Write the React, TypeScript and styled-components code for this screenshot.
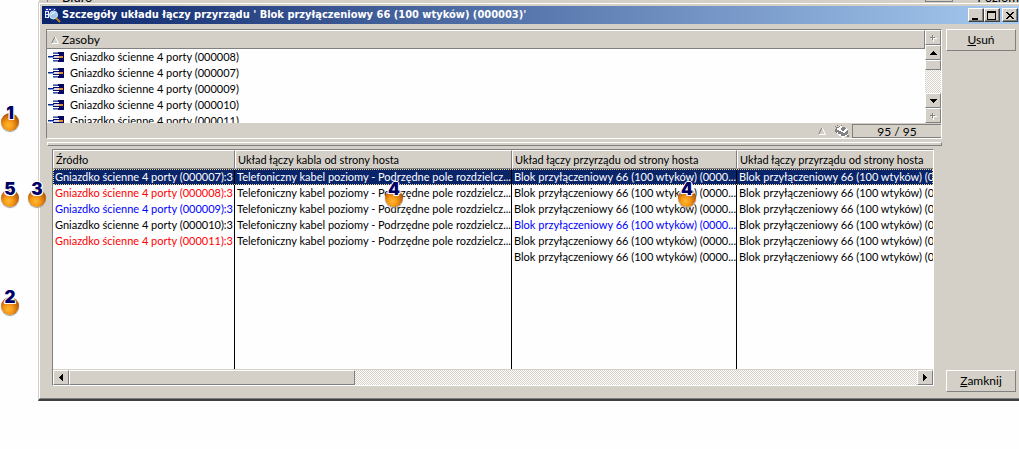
import React from "react";
import styled, { createGlobalStyle, css } from "styled-components";

const face = "#d4d0c8";
const shade = "#808080";

const GlobalStyle = createGlobalStyle`
  * { box-sizing: border-box; }
  body {
    margin: 0;
    background: #fefefe;
    color: #000;
    font: 11px/16px Lato, "Liberation Sans", sans-serif;
  }
  button { font: inherit; color: inherit; padding: 0; }
`;

const dither = css`
  background: repeating-conic-gradient(${face} 0 25%, #fff 0 50%) 0 0 / 2px 2px;
`;

const Page = styled.main`
  position: relative;
  padding-left: 38px;
  padding-bottom: 48px;
  overflow: hidden;
`;

const BackWindow = styled.div`
  display: flex;
  align-items: flex-end;
  justify-content: space-between;
  height: 2px;
  overflow: hidden;
  background: ${face};
  border-left: 1px solid #fff;
  padding-left: 8px;
  font-size: 13px;
  line-height: 10px;
`;

const BackLabel = styled.span`
  border-left: 1px solid ${shade};
  padding-left: 14px;
`;

const BackField = styled.span`
  display: flex;
  gap: 24px;
  &::before {
    content: "";
    width: 26px;
    border: 1px solid ${shade};
  }
`;

const Dialog = styled.section`
  background: ${face};
  border: 1px solid ${face};
  border-right: 0;
  border-bottom: 2px solid #404040;
`;

const DialogFrame = styled.div`
  border: 1px solid #fff;
  border-right: 0;
  border-bottom: 1px solid ${shade};
  padding: 2px 0 12px 2px;
`;

const TitleBar = styled.header`
  display: flex;
  align-items: center;
  height: 18px;
  padding: 0 1px 0 3px;
  background: linear-gradient(90deg, #0a246a, #a6caf0);
`;

const Title = styled.h1`
  flex: 1;
  margin: 0 0 0 1px;
  color: #fff;
  font: bold 11px/16px "DejaVu Sans Condensed", Tahoma, sans-serif;
  white-space: nowrap;
`;

const CaptionButton = styled.button<{ $apart?: boolean }>`
  display: grid;
  place-items: center;
  width: 16px;
  height: 14px;
  margin-left: ${(p) => (p.$apart ? 2 : 0)}px;
  background: ${face};
  border: 1px solid;
  border-color: #fff #404040 #404040 #fff;
  box-shadow: inset -1px -1px ${shade};
`;

const Content = styled.div`
  display: flex;
  gap: 4px;
  padding: 5px 3px 0 4px;
`;

const Main = styled.div`
  flex: 1;
  min-width: 0;
`;

const Side = styled.div`
  display: flex;
  flex-direction: column;
  justify-content: space-between;
  width: 70px;
  margin-bottom: -6px;
`;

const PushButton = styled.button`
  height: 22px;
  background: ${face};
  border: 1px solid;
  border-color: #fff ${shade} ${shade} #fff;
  font-size: 12px;
`;

const ListPanel = styled.div`
  border: 1px solid;
  border-color: ${shade} #fff #fff ${shade};
`;

const ListBody = styled.div`
  display: flex;
  height: 93px;
`;

const ListArea = styled.div`
  flex: 1;
  min-width: 0;
  display: flex;
  flex-direction: column;
`;

const ListHeader = styled.div`
  display: flex;
  align-items: center;
  gap: 3px;
  height: 19px;
  padding: 1px 4px 0;
  border: solid;
  border-width: 1px 1px 1px 0;
  border-color: #fff ${shade} ${shade};
  font-size: 12px;
`;

const Items = styled.ul`
  flex: 1;
  min-height: 0;
  margin: 0;
  padding: 0 0 0 1px;
  list-style: none;
  overflow: hidden;
  background: #fefefe;
`;

const Item = styled.li`
  display: flex;
  align-items: center;
  gap: 6px;
  height: 16px;
  white-space: nowrap;
`;

const VerticalBar = styled.div`
  display: flex;
  flex-direction: column;
  width: 16px;
`;

const BarButton = styled.button`
  display: grid;
  place-items: center;
  flex: none;
  width: 16px;
  height: 15px;
  background: ${face};
  border: 1px solid;
  border-color: #fff ${shade} ${shade} #fff;
`;

const Track = styled.div`
  flex: 1;
  display: flex;
  min-width: 0;
  ${dither}
`;

const Thumb = styled.div<{ $width: string; $height: string }>`
  width: ${(p) => p.$width};
  height: ${(p) => p.$height};
  background: ${face};
  border: 1px solid;
  border-color: #fff ${shade} ${shade} #fff;
`;

const ListFooter = styled.div`
  display: flex;
  align-items: center;
  justify-content: flex-end;
  gap: 2px;
  height: 15px;
`;

const FooterIcons = styled.span`
  display: flex;
  align-items: center;
  gap: 8px;
`;

const Counter = styled.output`
  width: 89px;
  height: 14px;
  border: 1px solid ${shade};
  border-right-width: 0;
  text-align: center;
  font-size: 12px;
  line-height: 13px;
`;

const Splitter = styled.div`
  height: 4px;
  margin: 3px 0 3px 1px;
  border: 1px solid;
  border-color: #fff ${shade} ${shade} #fff;
`;

const Grid = styled.div`
  margin: 0 8px 0 6px;
  border: 1px solid;
  border-color: ${shade} #fff #fff ${shade};
  background: #fefefe;
`;

const Table = styled.table`
  width: 100%;
  table-layout: fixed;
  border-collapse: separate;
  border-spacing: 0;
`;

const Head = styled.th`
  height: 19px;
  padding: 0 2px;
  background: ${face};
  border: 1px solid;
  border-color: #fff ${shade} ${shade} #fff;
  font-weight: normal;
  text-align: left;
  white-space: nowrap;
  overflow: hidden;
  &:last-child { border-right: 0; }
`;

const Row = styled.tr<{ $selected?: boolean }>`
  ${(p) =>
    p.$selected &&
    css`
      background: #0a246a;
      color: #fff;
      outline: 1px dotted #f5db95;
      outline-offset: -1px;
    `}
`;

const Cell = styled.td<{ $color?: string }>`
  height: 16px;
  padding: 0 0 0 2px;
  border-right: 1px solid #000;
  color: ${(p) => p.$color ?? "inherit"};
  white-space: nowrap;
  overflow: hidden;
  &:last-child { border-right: 0; }
`;

const Filler = styled(Cell)`
  height: 104px;
`;

const HorizontalBar = styled.div`
  display: flex;
  height: 16px;
  border-top: 1px solid ${face};
`;

const Pin = styled.div<{ $x: number; $y: number }>`
  position: absolute;
  z-index: 1;
  left: ${(p) => p.$x}px;
  top: ${(p) => p.$y}px;
  width: 20px;
  height: 27px;
  color: #000066;
  font: 900 17px/16px Inter, "Liberation Sans", sans-serif;
  text-align: center;
  text-shadow: 1px 0 #fff, -1px 0 #fff, 0 1px #fff, 0 -1px #fff, 1px 1px #fff, -1px 1px #fff;
  &::before {
    content: "";
    position: absolute;
    z-index: -1;
    left: 1px;
    bottom: 1px;
    width: 18px;
    height: 18px;
    border-radius: 50%;
    background: radial-gradient(circle at 42% 68%, #ffb830 0, #f59a18 28%, #c4640c 60%, #6a3a20 100%);
    box-shadow: 0 1px 1px #999;
  }
`;

const SearchWindowIcon = () => (
  <svg width="16" height="16" viewBox="0 0 16 16" aria-hidden="true">
    <path d="M0 1h11v3H0z" fill="#2438a8" />
    <path d="M1 2h2v1H1zM4 2h2v1H4zM9 2h1v1H9z" fill="#fff" />
    <path d="M0 4h4v7H0z" fill="#e8ecf8" />
    <path d="M1 5h2v2H1zM1 8h2v2H1z" fill="#2438a8" />
    <circle cx="8.500" cy="8" r="4" fill="#9cc8ec" stroke="#d8e4f4" />
    <path d="M6 8q1-3 4-2" stroke="#fff" fill="none" />
    <path d="M11 11l4 4" stroke="#c08030" strokeWidth="2" />
  </svg>
);

const SocketIcon = () => (
  <svg width="16" height="12" viewBox="0 0 16 12" shapeRendering="crispEdges" aria-hidden="true">
    <path d="M8 1h8v2H8zM8 9h8v2H8z" fill="#06065e" />
    <path d="M5 1h5v1H5zM5 10h5v1H5z" fill="#7f94cc" />
    <path d="M5 2h5v1H5zM5 9h5v1H5z" fill="#3a54a4" />
    <path d="M0 5h6v1H0z" fill="#0a2a90" />
    <path d="M0 6h6v1H0z" fill="#7fa0d8" />
    <path d="M5 4h6v1H5zM5 7h6v1H5z" fill="#06065e" />
    <path d="M6 5h5v2H6z" fill="#d8d8e8" />
    <path d="M11 5h4v2h-4z" fill="#e89020" />
    <path d="M11 3h5v2h-5zM11 7h5v2h-5zM15 1h1v10h-1z" fill="#06065e" />
  </svg>
);

const SortIcon = () => (
  <svg width="8" height="8" viewBox="0 0 8 8" aria-hidden="true">
    <path d="M.5 7.5L4 .5" stroke="#808080" fill="none" />
    <path d="M4 .5l3.500 7H.5" stroke="#fff" fill="none" />
  </svg>
);

const PrinterIcon = () => (
  <svg width="16" height="14" viewBox="0 0 16 14" shapeRendering="crispEdges" aria-hidden="true">
    <path d="M1 5l5-3 8 4v5l-4 2-9-5z" fill="#808080" />
    <path d="M2 5l5-3 7 3-4 4z" fill="#fff" />
    <path d="M6 5l3-2 3 1-3 3z" fill="#808080" />
    <path d="M1 2h1v1H1zM3 1h1v1H3zM5 2h1v1H5zM7 1h1v1H7zM2 3h1v1H2zM4 3h1v1H4z" fill="#808080" />
    <path d="M3 8l6 4h1l4-2v1l-5 3-6-4z" fill="#fff" />
    <path d="M4 9h2v1H4zM7 11h2v1H7zM13 11h2v2h-2z" fill="#808080" />
  </svg>
);

const PlusIcon = () => (
  <svg width="8" height="8" viewBox="0 0 8 8" shapeRendering="crispEdges" aria-hidden="true">
    <path d="M4 2h1v6H4zM2 4h6v1H2z" fill="#fff" />
    <path d="M3 1h1v5H3zM1 3h5v1H1z" fill="#808080" />
  </svg>
);

const arrows = {
  up: "M3 0h1v1h1v1h1v1h1v1H0V3h1V2h1V1h1z",
  down: "M0 0h7v1H6v1H5v1H4v1H3V3H2V2H1V1H0z",
  left: "M4 0v7H3V6H2V5H1V4H0V3h1V2h1V1h1V0z",
  right: "M0 0v7h1V6h1V5h1V4h1V3H3V2H2V1H1V0z",
};

const Arrow = ({ to }: { to: keyof typeof arrows }) => {
  const vertical = to === "up" || to === "down";
  return (
    <svg width={vertical ? 7 : 4} height={vertical ? 4 : 7} shapeRendering="crispEdges" aria-hidden="true">
      <path d={arrows[to]} />
    </svg>
  );
};

const resources = ["000008", "000007", "000009", "000010", "000011"];

const cable = "Telefoniczny kabel poziomy - Podrzędne pole rozdzielcz...";
const block = "Blok przyłączeniowy 66 (100 wtyków) (0000...";
const blockCut = "Blok przyłączeniowy 66 (100 wtyków) (0.";

const rows: { source?: string; color?: string; blockColor?: string; selected?: boolean }[] = [
  { source: "000007", selected: true },
  { source: "000008", color: "#ff0000" },
  { source: "000009", color: "#0000ff" },
  { source: "000010", blockColor: "#0000ff" },
  { source: "000011", color: "#ff0000" },
  {},
];

const pins = [
  { n: 1, x: 0, y: 105 },
  { n: 5, x: 0, y: 181 },
  { n: 3, x: 27, y: 181 },
  { n: 2, x: 0, y: 289 },
  { n: 4, x: 384, y: 181 },
  { n: 4, x: 677, y: 181 },
];

export default function App() {
  return (
    <>
      <GlobalStyle />
      <Page>
        <BackWindow>
          <BackLabel>Biuro</BackLabel>
          <BackField>Poziom</BackField>
        </BackWindow>
        <Dialog>
          <DialogFrame>
            <TitleBar>
              <SearchWindowIcon />
              <Title>Szczegóły układu łączy przyrządu ' Blok przyłączeniowy 66 (100 wtyków) (000003)'</Title>
              <CaptionButton aria-label="Minimalizuj">
                <svg width="10" height="9" shapeRendering="crispEdges"><path d="M1 7h6v2H1z" /></svg>
              </CaptionButton>
              <CaptionButton aria-label="Maksymalizuj">
                <svg width="10" height="9" shapeRendering="crispEdges">
                  <path d="M0 0h9v9H0zM1 2v6h7V2z" fillRule="evenodd" />
                </svg>
              </CaptionButton>
              <CaptionButton aria-label="Zamknij okno" $apart>
                <svg width="8" height="7" shapeRendering="crispEdges">
                  <path d="M0 0h2v1h1v1h2V1h1V0h2v1H7v1H6v1H5v1h1v1h1v1h1v1H6V6H5V5H3v1H2v1H0V6h1V5h1V4h1V3H2V2H1V1H0z" />
                </svg>
              </CaptionButton>
            </TitleBar>
            <Content>
              <Main>
                <ListPanel>
                  <ListBody>
                    <ListArea>
                      <ListHeader>
                        <SortIcon />
                        Zasoby
                      </ListHeader>
                      <Items>
                        {resources.map((id) => (
                          <Item key={id}>
                            <SocketIcon />
                            Gniazdko ścienne 4 porty ({id})
                          </Item>
                        ))}
                      </Items>
                    </ListArea>
                    <VerticalBar>
                      <BarButton aria-label="Pierwszy"><PlusIcon /></BarButton>
                      <BarButton aria-label="W górę"><Arrow to="up" /></BarButton>
                      <Track><Thumb $width="100%" $height="10px" /></Track>
                      <BarButton aria-label="W dół"><Arrow to="down" /></BarButton>
                      <BarButton aria-label="Ostatni"><PlusIcon /></BarButton>
                    </VerticalBar>
                  </ListBody>
                  <ListFooter>
                    <FooterIcons>
                      <SortIcon />
                      <PrinterIcon />
                    </FooterIcons>
                    <Counter>95 / 95</Counter>
                  </ListFooter>
                </ListPanel>
                <Splitter />
                <Grid>
                  <Table>
                    <colgroup>
                      <col width="182" />
                      <col width="277" />
                      <col width="225" />
                      <col />
                    </colgroup>
                    <thead>
                      <tr>
                        <Head>Źródło</Head>
                        <Head>Układ łączy kabla od strony hosta</Head>
                        <Head>Układ łączy przyrządu od strony hosta</Head>
                        <Head>Układ łączy przyrządu od strony hosta</Head>
                      </tr>
                    </thead>
                    <tbody>
                      {rows.map((r, i) => (
                        <Row key={i} $selected={r.selected}>
                          <Cell $color={r.color}>{r.source && `Gniazdko ścienne 4 porty (${r.source}):3`}</Cell>
                          <Cell>{r.source && cable}</Cell>
                          <Cell $color={r.blockColor}>{block}</Cell>
                          <Cell>{blockCut}</Cell>
                        </Row>
                      ))}
                      <tr aria-hidden="true">
                        <Filler />
                        <Filler />
                        <Filler />
                        <Filler />
                      </tr>
                    </tbody>
                  </Table>
                  <HorizontalBar>
                    <BarButton aria-label="W lewo"><Arrow to="left" /></BarButton>
                    <Track><Thumb $width="286px" $height="15px" /></Track>
                    <BarButton aria-label="W prawo"><Arrow to="right" /></BarButton>
                  </HorizontalBar>
                </Grid>
              </Main>
              <Side>
                <PushButton><u>U</u>suń</PushButton>
                <PushButton><u>Z</u>amknij</PushButton>
              </Side>
            </Content>
          </DialogFrame>
        </Dialog>
        {pins.map((p, i) => (
          <Pin key={i} $x={p.x} $y={p.y}>{p.n}</Pin>
        ))}
      </Page>
    </>
  );
}
